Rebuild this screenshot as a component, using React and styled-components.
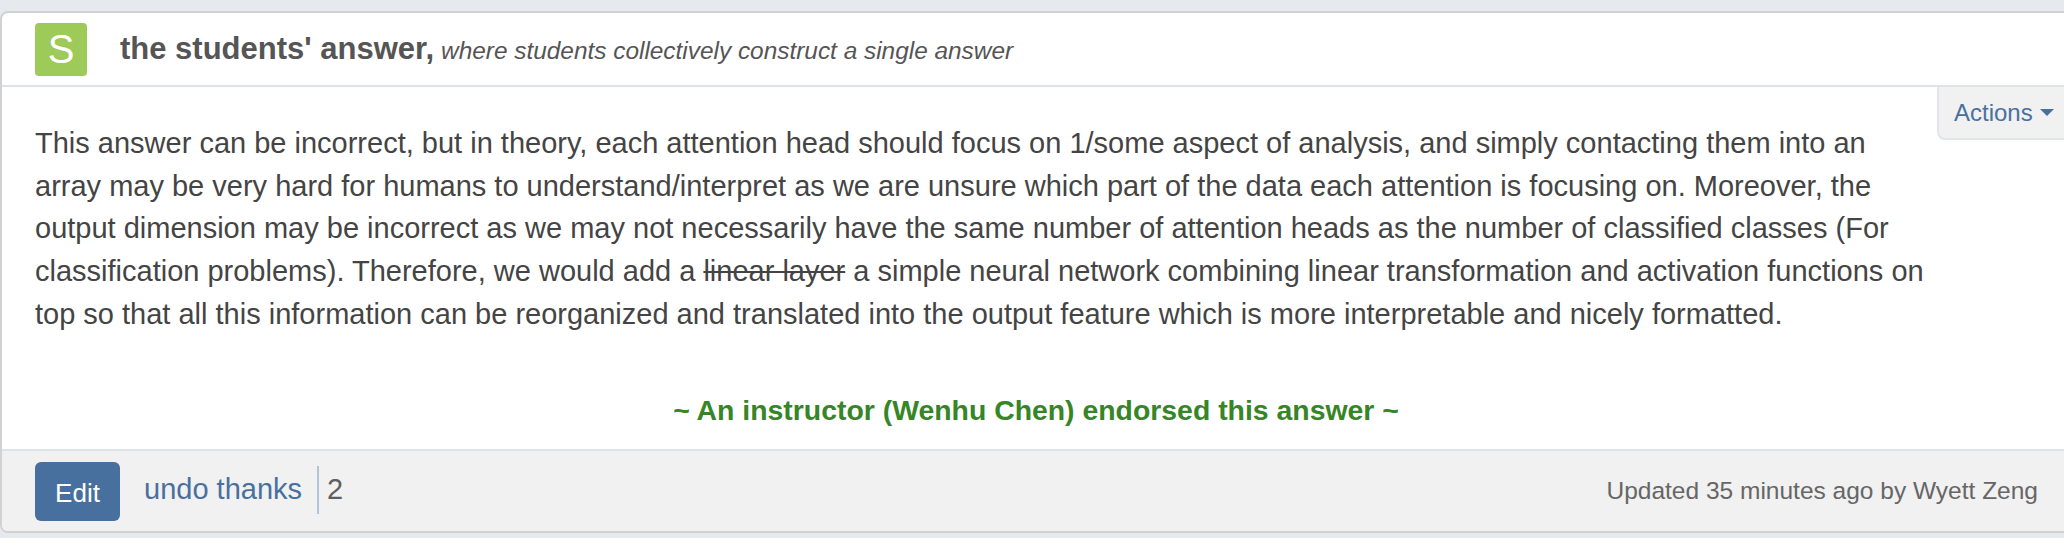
import React from "react";
import styled, { createGlobalStyle } from "styled-components";

const Global = createGlobalStyle`
  html, body { margin: 0; padding: 0; background: #e6e9ed; overflow: hidden; }
  body { font-family: "Liberation Sans", Arial, sans-serif; }
`;

const Page = styled.div`
  height: 538px;
  padding: 11px 0 0 0;
  box-sizing: border-box;
`;

const Card = styled.section`
  position: relative;
  height: 522px;
  box-sizing: border-box;
  display: flex;
  flex-direction: column;
  background: #fff;
  border-top: 2px solid #cfd1d3;
  border-left: 2px solid #d0d2d4;
  border-bottom: 2px solid #cfd1d3;
  border-radius: 8px 0 0 8px;
  overflow: hidden;
`;

const Header = styled.header`
  height: 74px;
  flex: none;
  box-sizing: border-box;
  display: flex;
  align-items: center;
  padding: 0 0 0 33px;
  border-bottom: 2px solid #dfe3e8;
`;

const Avatar = styled.div`
  width: 52px;
  height: 53px;
  flex: none;
  margin-top: 1px;
  border-radius: 4px;
  background: #9dca58;
  color: #fff;
  display: flex;
  align-items: center;
  justify-content: center;
  font-size: 40px;
`;

const Heading = styled.div`
  margin-left: 33px;
  color: #555;
  white-space: nowrap;
`;

const Title = styled.strong`
  font-size: 31px;
  font-weight: 700;
`;

const Subtitle = styled.em`
  margin-left: 7px;
  font-size: 24.4px;
  font-style: italic;
`;

const ActionsTab = styled.div`
  position: absolute;
  top: 74px;
  right: 0;
  width: 127px;
  height: 53px;
  box-sizing: border-box;
  display: flex;
  align-items: center;
  gap: 7px;
  padding-left: 15px;
  background: #f1f1f1;
  border-left: 2px solid #e2e5e9;
  border-bottom: 2px solid #e2e5e9;
  border-bottom-left-radius: 8px;
  color: #48709e;
  font-size: 24px;
`;

const Caret = styled.span`
  width: 0;
  height: 0;
  border-left: 7px solid transparent;
  border-right: 7px solid transparent;
  border-top: 7px solid #48709e;
`;

const Body = styled.div`
  flex: 1;
  padding: 35px 33px 0 33px;
  color: #444;
  font-size: 29px;
  line-height: 42.7px;
`;

const Answer = styled.p`
  margin: 0;
  max-width: 1890px;
`;

const Endorsement = styled.div`
  margin-top: 58px;
  padding-left: 6px;
  text-align: center;
  color: #368527;
  font-weight: 700;
  font-size: 28.4px;
  line-height: 32px;
`;

const Footer = styled.footer`
  height: 82px;
  flex: none;
  box-sizing: border-box;
  display: flex;
  align-items: center;
  padding: 0 26px 0 33px;
  background: #f1f1f1;
  border-top: 2px solid #dfe3e8;
`;

const EditButton = styled.button`
  width: 85px;
  height: 59px;
  border: 0;
  padding: 4px 0 0;
  border-radius: 6px;
  background: #48709e;
  color: #fff;
  font-family: inherit;
  font-size: 26px;
`;

const ThanksLink = styled.a`
  margin-left: 24px;
  color: #48709e;
  font-size: 29px;
  margin-top: -3px;
`;

const Count = styled.span`
  margin-left: 15px;
  padding-left: 8px;
  border-left: 2px solid #b3c3d8;
  height: 48px;
  line-height: 46px;
  margin-top: -3px;
  color: #5f5f5f;
  font-size: 29px;
`;

const Updated = styled.span`
  margin-left: auto;
  color: #666;
  font-size: 24.5px;
`;

export default function App() {
  return (
    <>
      <Global />
      <Page>
        <Card>
          <Header>
            <Avatar>S</Avatar>
            <Heading>
              <Title>the students' answer,</Title>
              <Subtitle>where students collectively construct a single answer</Subtitle>
            </Heading>
          </Header>
          <ActionsTab>
            Actions
            <Caret />
          </ActionsTab>
          <Body>
            <Answer>
              This answer can be incorrect, but in theory, each attention head should focus on 1/some aspect of analysis, and simply contacting them into an array may be very hard for humans to understand/interpret as we are unsure which part of the data each attention is focusing on. Moreover, the output dimension may be incorrect as we may not necessarily have the same number of attention heads as the number of classified classes (For classification problems). Therefore, we would add a <s>linear layer</s> a simple neural network combining linear transformation and activation functions on top so that all this information can be reorganized and translated into the output feature which is more interpretable and nicely formatted.
            </Answer>
            <Endorsement>~ An instructor (Wenhu Chen) endorsed this answer ~</Endorsement>
          </Body>
          <Footer>
            <EditButton>Edit</EditButton>
            <ThanksLink>undo thanks</ThanksLink>
            <Count>2</Count>
            <Updated>Updated 35 minutes ago by Wyett Zeng</Updated>
          </Footer>
        </Card>
      </Page>
    </>
  );
}
